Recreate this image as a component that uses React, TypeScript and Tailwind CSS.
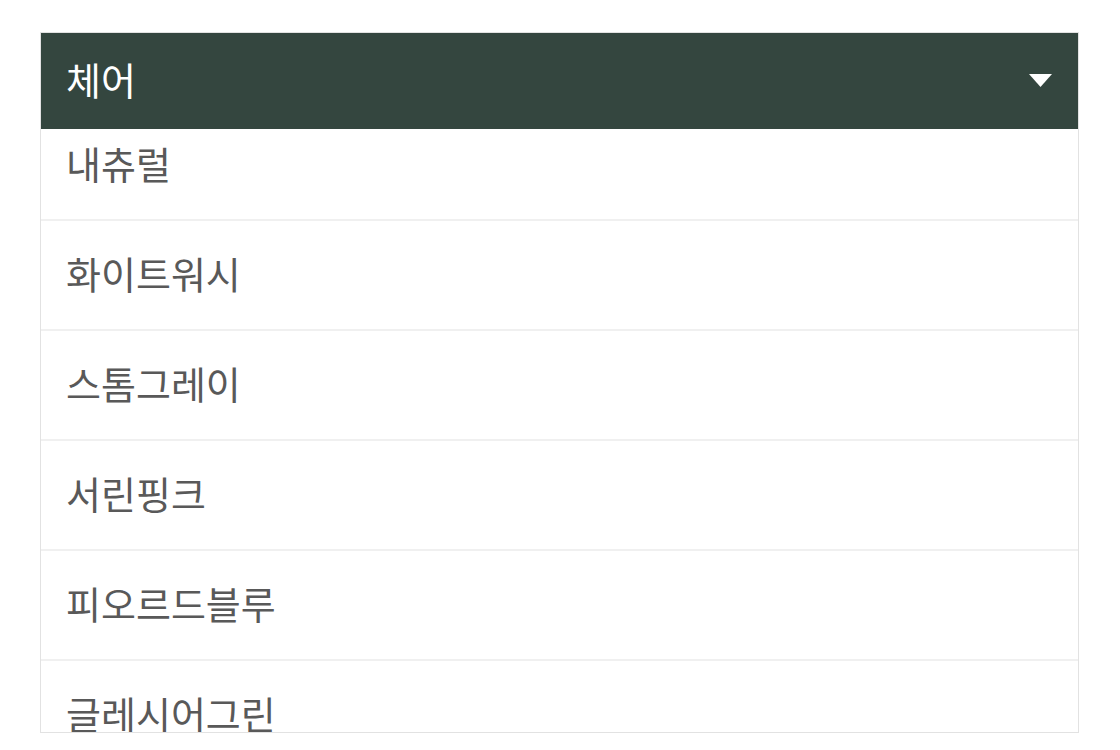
import React from "react";

const items = ["내츄럴", "화이트워시", "스톰그레이", "서린핑크", "피오르드블루", "글레시어그린"];

export default function App() {
  return (
    <div className="min-h-[750px] w-[1120px] bg-white pt-[32px] pl-[40px]" style={{ fontFamily: '"Noto Sans CJK KR", "Noto Sans", sans-serif' }}>
      <div className="w-[1039px] border border-[#e2e2e2] bg-white">
        <div className="flex h-[96px] items-center justify-between bg-[#34463f] pl-[25px] pr-[26px]">
          <span className="mt-[-4px] text-[38px] leading-none text-white">체어</span>
          <svg width="23" height="13" viewBox="0 0 23 13" className="mt-[-2px]">
            <polygon points="0,0 23,0 11.5,13" fill="#ffffff" />
          </svg>
        </div>
        <div className="h-[603px] overflow-hidden">
          <div className="mt-[-18px]">
            {items.map((t) => (
              <div key={t} className="flex h-[110px] items-center border-b-2 border-[#f0f0f0] pl-[25px] pb-[4px] text-[38px] leading-none text-[#595959]">
                {t}
              </div>
            ))}
          </div>
        </div>
      </div>
    </div>
  );
}
